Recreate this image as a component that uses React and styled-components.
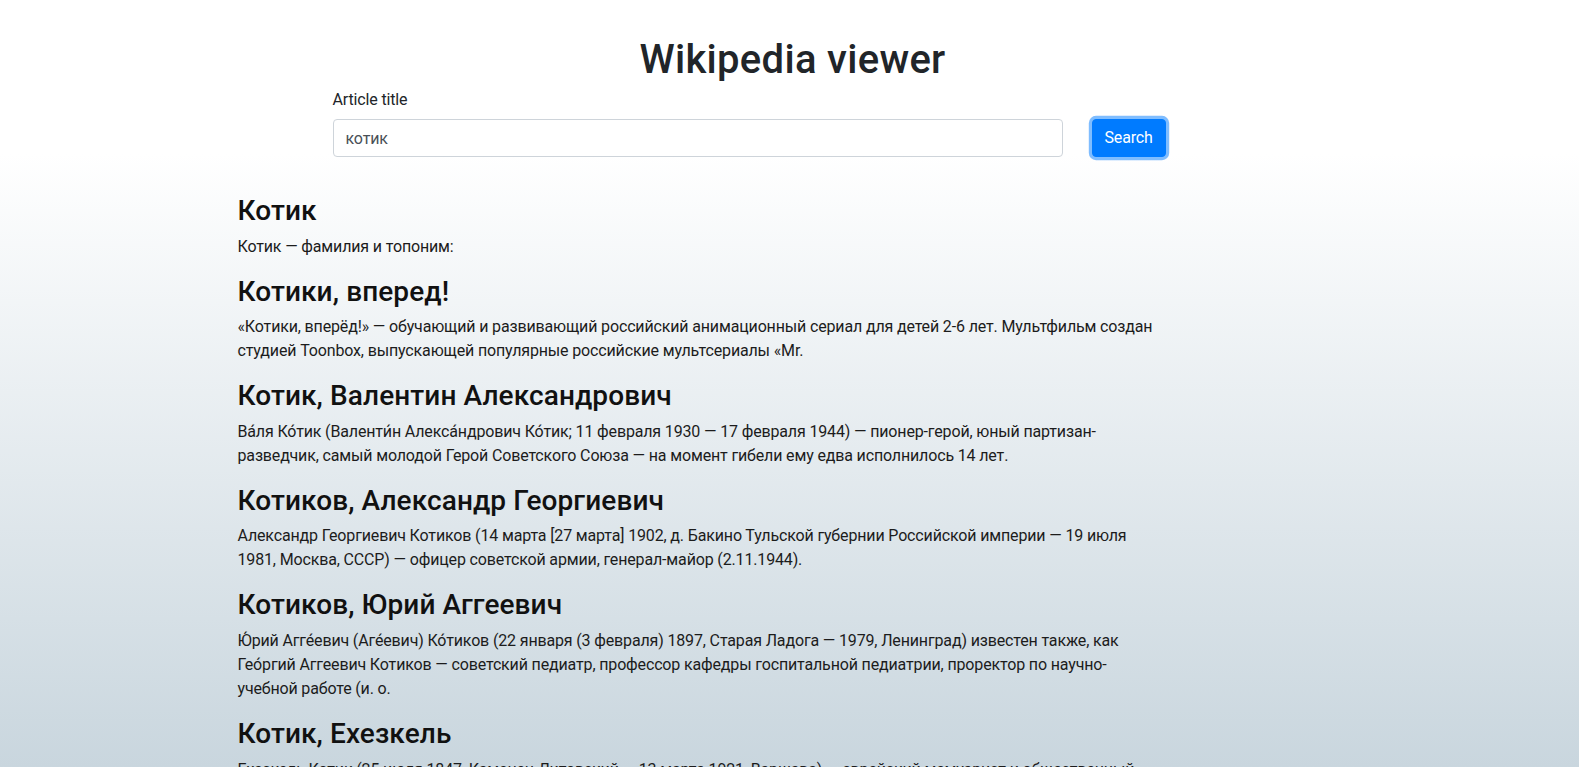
import React, { useState } from 'react'
import styled, { createGlobalStyle } from 'styled-components'

const GlobalStyle = createGlobalStyle`
  * {
    box-sizing: border-box;
  }
  body {
    margin: 0;
    font-family: Roboto, "Liberation Sans", sans-serif;
    font-size: 16px;
    line-height: 1.5;
    color: #212529;
    letter-spacing: -0.15px;
  }
`

const Page = styled.div`
  min-height: 100vh;
  background: linear-gradient(180deg, #ffffff 20%, #c9d6de 100%);
  background-attachment: fixed;
`

const Container = styled.div`
  max-width: 1140px;
  margin: 0 auto;
  padding: 31px 12px 0 18px;
`

const Title = styled.h1`
  margin: 0 0 3px;
  padding-top: 5px;
  text-align: center;
  font-size: 40px;
  font-weight: 500;
  line-height: 1.2;
  letter-spacing: 0.3px;
`

const SearchForm = styled.form`
  display: flex;
  align-items: flex-end;
  gap: 29px;
  margin: 0 0 16px 95px;
`

const Field = styled.div`
  display: flex;
  flex-direction: column;
  width: 730px;
`

const Label = styled.label`
  display: block;
  margin-bottom: 8px;
  padding-top: 1px;
  line-height: 23px;
`

const Input = styled.input`
  height: 38px;
  padding: 6px 12px;
  font: inherit;
  letter-spacing: inherit;
  color: #495057;
  background: #fff;
  border: 1px solid #ced4da;
  border-radius: 4px;
  outline: none;
`

const Button = styled.button`
  height: 38px;
  padding: 6px 12px;
  font: inherit;
  letter-spacing: inherit;
  color: #fff;
  background: #007bff;
  border: 1px solid #007bff;
  border-radius: 4px;
  box-shadow: ${(p) => (p.focused ? '0 0 0 3.2px rgba(0, 123, 255, 0.5)' : 'none')};
  cursor: pointer;
`

const Results = styled.div`
  max-width: 920px;
  padding-top: 21px;
`

const Heading = styled.h3`
  margin: 0 0 7px;
  font-size: 28px;
  font-weight: 500;
  line-height: 1.2;
  color: #111;
  letter-spacing: 0.1px;
`

const Snippet = styled.p`
  margin: 0 0 16px;
  color: #1c1c1c;
`

const results = [
  { title: 'Котик', text: 'Котик — фамилия и топоним:' },
  {
    title: 'Котики, вперед!',
    text: '«Котики, вперёд!» — обучающий и развивающий российский анимационный сериал для детей 2-6 лет. Мультфильм создан студией Toonbox, выпускающей популярные российские мультсериалы «Mr.',
  },
  {
    title: 'Котик, Валентин Александрович',
    text: 'Ва́ля Ко́тик (Валенти́н Алекса́ндрович Ко́тик; 11 февраля 1930 — 17 февраля 1944) — пионер-герой, юный партизан-разведчик, самый молодой Герой Советского Союза — на момент гибели ему едва исполнилось 14 лет.',
  },
  {
    title: 'Котиков, Александр Георгиевич',
    text: 'Александр Георгиевич Котиков (14 марта [27 марта] 1902, д. Бакино Тульской губернии Российской империи — 19 июля 1981, Москва, СССР) — офицер советской армии, генерал-майор (2.11.1944).',
  },
  {
    title: 'Котиков, Юрий Аггеевич',
    text: 'Ю́рий Агге́евич (Аге́евич) Ко́тиков (22 января (3 февраля) 1897, Старая Ладога — 1979, Ленинград) известен также, как Гео́ргий Аггеевич Котиков — советский педиатр, профессор кафедры госпитальной педиатрии, проректор по научно-учебной работе (и. о.',
  },
  {
    title: 'Котик, Ехезкель',
    text: 'Ехезкель Котик (25 июля 1847, Каменец-Литовский — 13 марта 1921, Варшава) — еврейский мемуарист и общественный деятель.',
  },
]

const App = () => {
  const [query, setQuery] = useState('котик')

  return (
    <Page>
      <GlobalStyle />
      <Container>
        <Title>Wikipedia viewer</Title>
        <SearchForm onSubmit={(e) => e.preventDefault()}>
          <Field>
            <Label htmlFor="title">Article title</Label>
            <Input id="title" value={query} onChange={(e) => setQuery(e.target.value)} />
          </Field>
          <Button type="submit" focused>
            Search
          </Button>
        </SearchForm>
        <Results>
          {results.map((item) => (
            <div key={item.title}>
              <Heading>{item.title}</Heading>
              <Snippet>{item.text}</Snippet>
            </div>
          ))}
        </Results>
      </Container>
    </Page>
  )
}

export default App
